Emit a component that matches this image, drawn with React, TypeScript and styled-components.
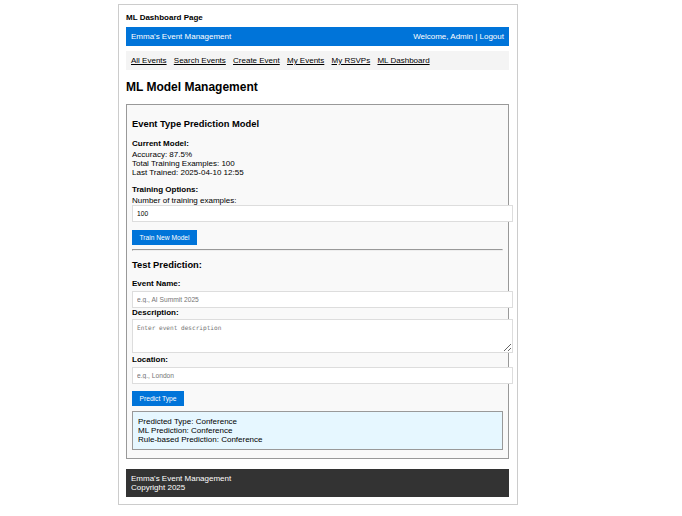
import React from "react";
import styled, { createGlobalStyle } from "styled-components";

const GlobalStyle = createGlobalStyle`
  body {
    margin: 0;
    background: #fff;
    color: #000;
    font: 8px/9px "Liberation Sans", Arial, sans-serif;
  }
`;

const Page = styled.div`
  box-sizing: border-box;
  width: 400px;
  height: 501px;
  margin: 4px 0 0 118px;
  padding: 8px 8px 7px 7px;
  border: 1px solid #ccc;
`;

const PageLabel = styled.div`
  height: 14px;
  font-weight: bold;
`;

const Header = styled.header`
  display: flex;
  justify-content: space-between;
  padding: 5px;
  background: #0074d9;
  color: #fff;
`;

const Nav = styled.nav`
  display: flex;
  gap: 7.22px;
  margin-top: 5px;
  padding: 5px;
  background: #f4f4f4;
`;

const NavLink = styled.a`
  color: #000;
  text-decoration: underline;
`;

const Title = styled.h1`
  margin: 10px 0;
  font-size: 12px;
  line-height: 14px;
`;

const Card = styled.section`
  box-sizing: border-box;
  height: 355px;
  padding: 5px;
  border: 1px solid #999;
  background: #f9f9f9;
`;

const Heading = styled.h2<{ $top: number; $bottom: number }>`
  margin: ${(p) => p.$top}px 0 ${(p) => p.$bottom}px;
  font-size: 9.36px;
  line-height: 11px;
`;

const Label = styled.div<{ $top?: number; $bottom?: number }>`
  margin: ${(p) => p.$top ?? 0}px 0 ${(p) => p.$bottom ?? 0}px;
  font-weight: bold;
`;

const Line = styled.div``;

const Field = styled.input`
  display: block;
  box-sizing: border-box;
  width: 381px;
  height: 17px;
  margin: 0;
  padding: 0 4px;
  border: 1px solid #ddd;
  background: #fff;
  font: 6.667px "Liberation Sans", Arial, sans-serif;
  &::placeholder {
    color: #757575;
  }
`;

const TextArea = styled.textarea`
  display: block;
  box-sizing: border-box;
  width: 381px;
  height: 34px;
  margin: 0;
  padding: 4px;
  border: 1px solid #ddd;
  background: #fff;
  font: 6.1px/8px "DejaVu Sans Mono", monospace;
  &::placeholder {
    color: #757575;
  }
`;

const Button = styled.button<{ $top: number; $width: number }>`
  display: block;
  width: ${(p) => p.$width}px;
  height: 15px;
  margin: ${(p) => p.$top}px 0 0;
  padding: 0;
  border: 0;
  background: #0074d9;
  color: #fff;
  font: 6.667px "Liberation Sans", Arial, sans-serif;
`;

const Divider = styled.hr`
  box-sizing: border-box;
  height: 2px;
  margin: 4px 0 0;
  border: 1px solid;
  border-color: #999 #eee #eee #999;
`;

const Result = styled.div`
  margin-top: 5px;
  padding: 5px;
  border: 1px solid #999;
  background: #e6f7ff;
`;

const Footer = styled.footer`
  margin-top: 10px;
  padding: 5px;
  background: #333;
  color: #fff;
`;

const links = ["All Events", "Search Events", "Create Event", "My Events", "My RSVPs", "ML Dashboard"];

export default function App() {
  return (
    <>
      <GlobalStyle />
      <Page>
        <PageLabel>ML Dashboard Page</PageLabel>
        <Header>
          <span>Emma's Event Management</span>
          <span>Welcome, Admin | Logout</span>
        </Header>
        <Nav>
          {links.map((link) => (
            <NavLink key={link} href="#">{link}</NavLink>
          ))}
        </Nav>
        <Title>ML Model Management</Title>
        <Card>
          <Heading $top={9} $bottom={9}>Event Type Prediction Model</Heading>
          <Label $bottom={2}>Current Model:</Label>
          <Line>Accuracy: 87.5%</Line>
          <Line>Total Training Examples: 100</Line>
          <Line>Last Trained: 2025-04-10 12:55</Line>
          <Label $top={8} $bottom={2}>Training Options:</Label>
          <Line>Number of training examples:</Line>
          <Field defaultValue="100" />
          <Button $top={8} $width={65}>Train New Model</Button>
          <Divider />
          <Heading $top={9} $bottom={8}>Test Prediction:</Heading>
          <Label $bottom={3}>Event Name:</Label>
          <Field placeholder="e.g., AI Summit 2025" />
          <Label $bottom={2}>Description:</Label>
          <TextArea placeholder="Enter event description" />
          <Label $top={2} $bottom={3}>Location:</Label>
          <Field placeholder="e.g., London" />
          <Button $top={7} $width={52}>Predict Type</Button>
          <Result>
            <Line>Predicted Type: Conference</Line>
            <Line>ML Prediction: Conference</Line>
            <Line>Rule-based Prediction: Conference</Line>
          </Result>
        </Card>
        <Footer>
          <Line>Emma's Event Management</Line>
          <Line>Copyright 2025</Line>
        </Footer>
      </Page>
    </>
  );
}
